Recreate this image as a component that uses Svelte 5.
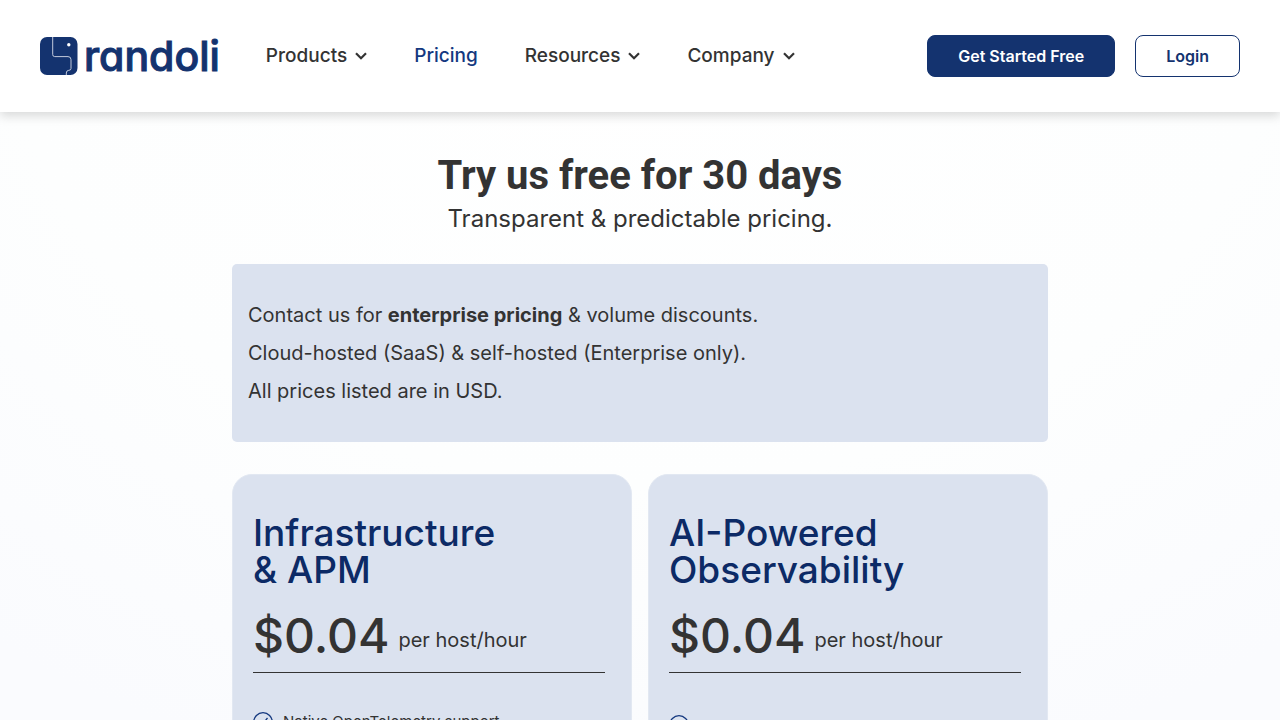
<script>
  const links = [
    { label: 'Products', menu: true },
    { label: 'Pricing', current: true },
    { label: 'Resources', menu: true },
    { label: 'Company', menu: true }
  ];

  const plans = [
    {
      name: ['Infrastructure', '& APM'],
      price: '$0.04',
      unit: 'per host/hour',
      features: ['Native OpenTelemetry support']
    },
    { name: ['AI-Powered', 'Observability'], price: '$0.04', unit: 'per host/hour', roomy: true, features: [''] }
  ];
</script>

<div class="page">
  <header>
    <a class="logo" href="#home">
      <svg width="38" height="38" viewBox="0 0 38 38" aria-hidden="true">
        <rect width="37.500" height="38" rx="7" fill="#14336f" />
        <path
          d="M12.700 0V17.500Q12.700 19.600 14.700 19.600H28Q31 19.600 31 22.600V31.500Q31 33.300 28.800 33.300Q26.300 33.500 26.300 36V38"
          fill="none"
          stroke="#c3cbdc"
          stroke-width="1"
        />
        <circle cx="28.800" cy="7.700" r="1.700" fill="#fff" />
      </svg>
      <span>randoli</span>
    </a>
    <nav>
      {#each links as link}
        {#if link.menu}
          <button class="link" type="button">
            {link.label}
            <svg width="12" height="8" viewBox="0 0 12 8" aria-hidden="true">
              <path d="M1 1.200L6 6.200L11 1.200" fill="none" stroke="currentColor" stroke-width="2.200" />
            </svg>
          </button>
        {:else}
          <a class="link" class:current={link.current} href="#pricing">{link.label}</a>
        {/if}
      {/each}
    </nav>
    <div class="actions">
      <a class="action solid" href="#start">Get Started Free</a>
      <a class="action" href="#login">Login</a>
    </div>
  </header>

  <main>
    <h1>Try us free for 30 days</h1>
    <p class="lead">Transparent &amp; predictable pricing.</p>

    <section class="note">
      <p>Contact us for <strong>enterprise pricing</strong> &amp; volume discounts.</p>
      <p>Cloud-hosted (SaaS) &amp; self-hosted (Enterprise only).</p>
      <p>All prices listed are in USD.</p>
    </section>

    <div class="plans">
      {#each plans as plan}
        <article>
          <h2>{plan.name[0]}<br />{plan.name[1]}</h2>
          <p class="price"><span class="amount">{plan.price}</span><span>{plan.unit}</span></p>
          <ul class:roomy={plan.roomy}>
            {#each plan.features as feature}
              <li>
                <svg width="20" height="20" viewBox="0 0 20 20" aria-hidden="true">
                  <circle cx="10" cy="10" r="9.300" fill="none" stroke="#14387f" stroke-width="1.300" />
                  <path d="M5.500 10.500L8.500 13.500L14.500 6" fill="none" stroke="#14387f" stroke-width="1.300" />
                </svg>
                {feature}
              </li>
            {/each}
          </ul>
        </article>
      {/each}
    </div>
  </main>
</div>

<style>
  :global(body) {
    margin: 0;
  }
  .page {
    height: 100vh;
    overflow: hidden;
    color: #333;
    font-family: Inter, 'Liberation Sans', sans-serif;
    font-size: 20px;
    background: radial-gradient(ellipse 110% 150% at 50% 0, #fff 0%, #fdfefe 45%, #fafbfe 75%, #fafbfe 100%);
  }
  header {
    position: relative;
    display: flex;
    align-items: center;
    box-sizing: border-box;
    height: 112px;
    padding: 0 40px;
    background: #fff;
    box-shadow: 0 4px 10px rgba(0, 0, 0, 0.15);
  }
  a {
    color: inherit;
    text-decoration: none;
  }
  .logo {
    display: flex;
    align-items: center;
    gap: 6px;
    color: #14336f;
    font-size: 41px;
    line-height: 48px;
    font-weight: 500;
    font-feature-settings: 'cv11' 1;
    -webkit-text-stroke: 1px #14336f;
    stroke-linejoin: round;
  }
  nav {
    display: flex;
    gap: 47px;
    margin-left: 46px;
  }
  .link {
    display: flex;
    align-items: center;
    gap: 8px;
    padding: 0;
    border: 0;
    background: none;
    color: #333;
    font: inherit;
    font-size: 19px;
    font-weight: 500;
    line-height: 28px;
    cursor: pointer;
  }
  .link.current {
    color: #14387f;
  }
  .actions {
    display: flex;
    gap: 20px;
    margin-left: auto;
  }
  .action {
    padding: 0 30px;
    border: 1px solid #14336f;
    border-radius: 8px;
    color: #14336f;
    font-size: 16px;
    font-weight: 600;
    line-height: 40px;
  }
  .solid {
    background: #14336f;
    color: #fff;
  }
  main {
    max-width: 816px;
    margin: 0 auto;
    padding-top: 40px;
  }
  h1,
  h2,
  p,
  ul {
    margin: 0;
    padding: 0;
  }
  h1 {
    font-family: Roboto, Inter, sans-serif;
    font-size: 40px;
    line-height: 48px;
    text-align: center;
  }
  .lead {
    font-size: 24px;
    line-height: 38px;
    text-align: center;
  }
  .note {
    margin: 26px 0 32px;
    padding: 32px 16px;
    border-radius: 5px;
    background: #dbe2ef;
    line-height: 38px;
  }
  .plans {
    display: grid;
    grid-template-columns: 1fr 1fr;
    gap: 16px;
  }
  article {
    min-height: 400px;
    padding: 39px 26px 40px 20px;
    border: 1px solid #e2e8f2;
    border-radius: 20px;
    background: #dbe2ef;
  }
  h2 {
    color: #0c2a66;
    font-size: 37px;
    line-height: 37px;
    font-weight: 500;
  }
  .price {
    display: flex;
    align-items: center;
    gap: 9px;
    margin-top: 18px;
    padding-bottom: 6px;
    border-bottom: 1px solid #333;
  }
  .price span {
    padding-top: 8px;
    line-height: 52px;
  }
  .price .amount {
    padding: 0;
    font-size: 48px;
    font-weight: 500;
    line-height: 60px;
  }
  ul {
    margin-top: 35px;
    list-style: none;
    font-size: 15px;
    line-height: 28px;
  }
  .roomy {
    margin-top: 38px;
  }
  li {
    display: flex;
    align-items: center;
    gap: 10px;
    min-height: 28px;
  }
</style>
